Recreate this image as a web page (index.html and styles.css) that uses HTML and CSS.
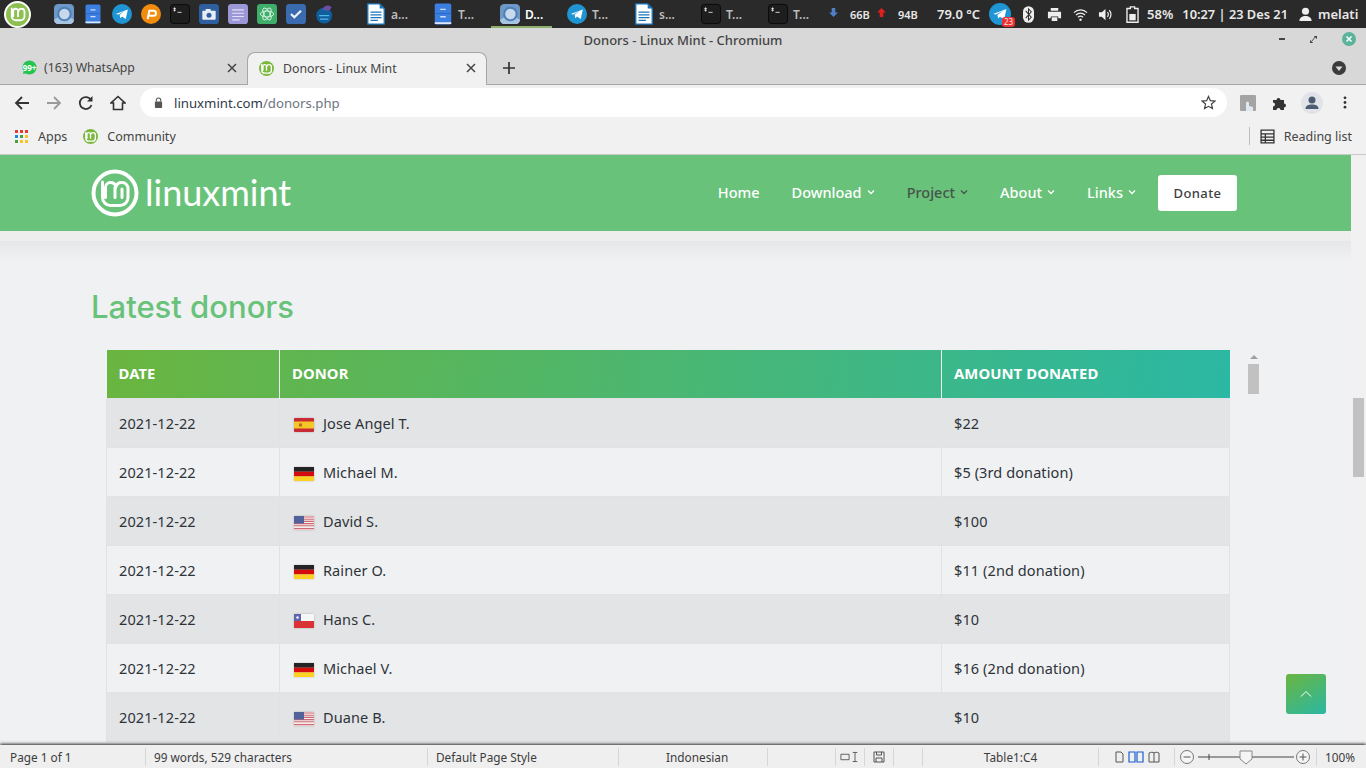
FILE: index.html
```html
<!DOCTYPE html>
<html lang="en">
<head>
    <meta charset="UTF-8">
    <meta name="viewport" content="width=device-width, initial-scale=1.0">
    <title>Donors - Linux Mint - Chromium</title>
    <link rel="stylesheet" href="styles.css">
</head>
<body>
    <!-- shared symbols -->
    <svg class="defs" aria-hidden="true">
        <defs>
            <symbol id="mint" viewBox="0 0 48 48">
                <circle cx="24" cy="24" r="21.5" fill="none" stroke="currentColor" stroke-width="4"/>
                <path d="M11.5 13v15.5a8 8 0 0 0 8 8h9.500a8 8 0 0 0 8-8v-9a6 6 0 0 0-6-6 6 6 0 0 0-6 4 6 6 0 0 0-6-4 5 5 0 0 0-4.500 5v10M24 18v10.500M31 20v8.500" fill="none" stroke="currentColor" stroke-width="3" stroke-linecap="round"/>
            </symbol>
            <symbol id="mintm" viewBox="4 4 40 40">
                <path d="M11.5 13v15.5a8 8 0 0 0 8 8h9.500a8 8 0 0 0 8-8v-9a6 6 0 0 0-6-6 6 6 0 0 0-6 4 6 6 0 0 0-6-4 5 5 0 0 0-4.500 5v10M24 18v10.500" fill="none" stroke="currentColor" stroke-width="3.600" stroke-linecap="round"/>
            </symbol>
            <symbol id="doc" viewBox="0 0 20 24">
                <path d="M1 1h13l5 5v17H1z" fill="#fff" stroke="#1b75bb" stroke-width="1.500"/>
                <path d="M14 1l5 5h-5z" fill="#1b75bb"/>
                <path d="M4 10h12M4 13h12M4 16h12M4 19h8" stroke="#1b75bb" stroke-width="1.200"/>
            </symbol>
            <symbol id="files" viewBox="0 0 20 24">
                <rect x="1" y="0.500" width="18" height="23" rx="2" fill="#3b7fe0"/>
                <path d="M1 22h18" stroke="#dfe8f5" stroke-width="2"/>
                <path d="M7 7h6M7 15h6" stroke="#cfe0f8" stroke-width="1.500"/>
                <path d="M1 11.500h18" stroke="#2b66bd"/>
            </symbol>
            <symbol id="chromium" viewBox="0 0 24 24">
                <rect width="24" height="24" rx="5" fill="#6d98c7"/>
                <path d="M0 19L12 12l12 7v0a5 5 0 0 1-5 5H5a5 5 0 0 1-5-5z" fill="#a9c4e0"/>
                <circle cx="12.500" cy="12" r="7.500" fill="#c9d9ec" stroke="#4f80b8" stroke-width="2.500"/>
            </symbol>
            <symbol id="telegram" viewBox="0 0 24 24">
                <circle cx="12" cy="12" r="12" fill="#1f96d3"/>
                <path d="M4.500 12L19 6.500 16.500 18l-4.500-3-2 2-.8-4 6-4.500-7.500 4z" fill="#fff"/>
            </symbol>
            <symbol id="terminal" viewBox="0 0 24 24">
                <rect x="0.500" y="0.500" width="23" height="23" rx="4" fill="#1e1e1e" stroke="#050505"/>
                <path d="M4 5.500h3M4 7.500h3M5.500 4v5M9 10h5" stroke="#eee" stroke-width="1"/>
            </symbol>
            <symbol id="chev" viewBox="0 0 8 6">
                <path d="M1 1.500l3 3 3-3" fill="none" stroke="currentColor" stroke-width="1.300"/>
            </symbol>
            <symbol id="close" viewBox="0 0 10 10">
                <path d="M1 1l8 8M9 1l-8 8" fill="none" stroke="#444" stroke-width="1.500"/>
            </symbol>
            <symbol id="flag-es" viewBox="0 0 20 14">
                <rect width="20" height="14" rx="1" fill="#c8222b"/>
                <rect y="3.500" width="20" height="7" fill="#f7c51e"/>
                <rect x="5" y="5.500" width="3" height="3" fill="#b5651d"/>
            </symbol>
            <symbol id="flag-de" viewBox="0 0 20 14">
                <rect width="20" height="4.700" fill="#1a1a1a"/>
                <rect y="4.700" width="20" height="4.700" fill="#d40000"/>
                <rect y="9.400" width="20" height="4.600" fill="#fcd116"/>
            </symbol>
            <symbol id="flag-us" viewBox="0 0 20 14">
                <rect width="20" height="14" fill="#f4eeee"/>
                <path d="M0 1h20M0 3.200h20M0 5.400h20M0 7.600h20M0 9.800h20M0 12.600h20" stroke="#d0656f" stroke-width="1.100"/>
                <rect width="10" height="7.500" fill="#4a5a95"/>
            </symbol>
            <symbol id="flag-cl" viewBox="0 0 20 14">
                <rect width="20" height="7" fill="#f7f7f7"/>
                <rect y="7" width="20" height="7" fill="#da2a2e"/>
                <rect width="7" height="7" fill="#5b5fa8"/>
                <circle cx="3.500" cy="3.500" r="1.200" fill="#fff"/>
            </symbol>
        </defs>
    </svg>

    <!-- desktop panel -->
    <div class="panel">
        <span class="menu-btn"><svg class="menu-logo"><use href="#mintm"/></svg></span>
        <div class="launchers">
            <svg class="lnc"><use href="#chromium"/></svg>
            <svg class="lnc"><use href="#files"/></svg>
            <svg class="lnc"><use href="#telegram"/></svg>
            <svg class="lnc" viewBox="0 0 24 24"><circle cx="12" cy="12" r="12" fill="#f28c0f"/><path d="M8 18l2-10h5a3 3 0 0 1 0 6h-5" fill="none" stroke="#fff" stroke-width="2.400"/></svg>
            <svg class="lnc"><use href="#terminal"/></svg>
            <svg class="lnc" viewBox="0 0 24 24"><rect width="24" height="24" rx="4" fill="#2f5f9e"/><rect x="4" y="8" width="16" height="11" rx="1" fill="#e8eef5"/><rect x="8" y="6" width="6" height="3" fill="#e8eef5"/><circle cx="12" cy="13.500" r="3" fill="#2f5f9e"/></svg>
            <svg class="lnc" viewBox="0 0 24 24"><rect width="24" height="24" rx="4" fill="#9c97d6"/><path d="M5 7h14M5 11h14M5 15h14M5 19h9" stroke="#e3e1f5" stroke-width="1.300"/></svg>
            <svg class="lnc" viewBox="0 0 24 24"><rect width="24" height="24" rx="4" fill="#3fae6a"/><g fill="none" stroke="#e6f7ec" stroke-width="1"><ellipse cx="12" cy="12" rx="8" ry="3.500"/><ellipse cx="12" cy="12" rx="8" ry="3.500" transform="rotate(60 12 12)"/><ellipse cx="12" cy="12" rx="8" ry="3.500" transform="rotate(120 12 12)"/></g></svg>
            <svg class="lnc" viewBox="0 0 24 24"><rect width="24" height="24" rx="4" fill="#3a6ab0"/><path d="M6 12l4 4 8-8" fill="none" stroke="#eef3fa" stroke-width="2.600"/></svg>
            <svg class="lnc" viewBox="0 0 24 24"><circle cx="11" cy="14" r="9.500" fill="#0f5f9e"/><path d="M5 14h12M6 18h10" stroke="#53b7e8" stroke-width="1.500"/><path d="M9 7c1-5 7-7 11-3l-3 4z" fill="#6a4fa3"/></svg>
        </div>
        <div class="winlist">
            <div class="win"><svg class="win-ic"><use href="#doc"/></svg><span>a...</span></div>
            <div class="win"><svg class="win-ic"><use href="#files"/></svg><span>T...</span></div>
            <div class="win on"><svg class="win-ic"><use href="#chromium"/></svg><span>D...</span></div>
            <div class="win"><svg class="win-ic"><use href="#telegram"/></svg><span>T...</span></div>
            <div class="win"><svg class="win-ic"><use href="#doc"/></svg><span>s...</span></div>
            <div class="win"><svg class="win-ic"><use href="#terminal"/></svg><span>T...</span></div>
            <div class="win"><svg class="win-ic"><use href="#terminal"/></svg><span>T...</span></div>
        </div>
        <div class="tray">
            <svg class="tray-arrow" viewBox="0 0 10 10"><path d="M3 0h4v5h3L5 10 0 5h3z" fill="#4f7fc4"/></svg>
            <span class="speed">66B</span>
            <svg class="tray-arrow up" viewBox="0 0 10 10"><path d="M3 10h4V5h3L5 0 0 5h3z" fill="#e0201c"/></svg>
            <span class="speed">94B</span>
            <span class="temp">79.0 °C</span>
            <span class="tg-tray"><svg class="tg-ic"><use href="#telegram"/></svg><b class="tg-badge">23</b></span>
            <svg class="bt" viewBox="0 0 12 18"><rect width="12" height="18" rx="6" fill="#eee"/><path d="M3 5l6 7-3 3V3l3 3-6 7" fill="none" stroke="#2b2b2b" stroke-width="1.100"/></svg>
            <svg class="ti print" viewBox="0 0 16 16"><path d="M4 1h8v3H4zM1 5h14v7h-3v-2H4v2H1zM5 11h6v4H5z" fill="#eee"/></svg>
            <svg class="ti wifi" viewBox="0 0 16 16"><path d="M1 6a10 10 0 0 1 14 0M3.200 8.500a7 7 0 0 1 9.600 0M5.300 11a4 4 0 0 1 5.400 0" fill="none" stroke="#eee" stroke-width="1.300"/><circle cx="8" cy="13.500" r="1.300" fill="#eee"/></svg>
            <svg class="ti vol" viewBox="0 0 16 16"><path d="M1 5.500h3L8 2v12l-4-3.500H1z" fill="#eee"/><path d="M10 5.500a3.500 3.500 0 0 1 0 5M12 3.500a6.500 6.500 0 0 1 0 9" fill="none" stroke="#eee" stroke-width="1.300"/></svg>
            <svg class="batt" viewBox="0 0 12 16"><path d="M4 .8h4v1.500h3.200v13H.8v-13H4z" fill="none" stroke="#eee" stroke-width="1.300"/><rect x="3" y="7.500" width="6" height="6" fill="#eee"/></svg>
            <span class="pct">58%</span>
            <span class="clock">10:27 | 23 Des 21</span>
            <svg class="ti user" viewBox="0 0 16 16"><circle cx="8" cy="4.500" r="3.800" fill="#eee"/><path d="M1.500 15c0-4 3-5.500 6.500-5.500s6.500 1.500 6.500 5.500z" fill="#eee"/></svg>
            <span class="uname">melati</span>
        </div>
    </div>

    <!-- browser window -->
    <div class="titlebar">
        <span class="wtitle">Donors - Linux Mint - Chromium</span>
        <div class="wbtns">
            <i class="w-min"></i>
            <svg class="w-max" viewBox="0 0 8 8"><path d="M5 0h3v3zM3 8H0V5zM6 1L2 6" fill="#444" stroke="#444"/></svg>
            <svg class="w-close" viewBox="0 0 14 14"><circle cx="7" cy="7" r="7" fill="#5bb39b"/><path d="M4.500 4.500l5 5M9.500 4.500l-5 5" stroke="#fff" stroke-width="1.500"/></svg>
        </div>
    </div>
    <div class="tabstrip">
        <div class="tab">
            <svg class="fav" viewBox="0 0 16 16"><circle cx="8" cy="8" r="7.500" fill="#25c351"/><path d="M1 15l1-4 3 3z" fill="#25c351"/></svg>
            <b class="wa-count">99+</b>
            <span class="tab-name">(163) WhatsApp</span>
            <svg class="tab-x"><use href="#close"/></svg>
        </div>
        <div class="tab active">
            <svg class="fav mint-fav"><use href="#mintm"/></svg>
            <span class="tab-name">Donors - Linux Mint</span>
            <svg class="tab-x"><use href="#close"/></svg>
        </div>
        <svg class="newtab" viewBox="0 0 12 12"><path d="M6 0v12M0 6h12" stroke="#333" stroke-width="1.700"/></svg>
        <svg class="tabmenu" viewBox="0 0 14 14"><circle cx="7" cy="7" r="7" fill="#3b3b3b"/><path d="M3.500 5.500h7L7 10z" fill="#ddd"/></svg>
    </div>
    <div class="toolbar">
        <svg class="tb-ic" viewBox="0 0 16 16"><path d="M15 8H2M8 2L2 8l6 6" fill="none" stroke="#333" stroke-width="1.800"/></svg>
        <svg class="tb-ic" viewBox="0 0 16 16"><path d="M1 8h13M8 2l6 6-6 6" fill="none" stroke="#9a9a9a" stroke-width="1.800"/></svg>
        <svg class="tb-ic" viewBox="0 0 16 16"><path d="M13.500 10a6 6 0 1 1-.5-5" fill="none" stroke="#333" stroke-width="1.800"/><path d="M14.500 1v5.500H9z" fill="#333"/></svg>
        <svg class="tb-ic" viewBox="0 0 16 16"><path d="M8 1.500L1 8h2.500v6.500h9V8H15zM6.500 14.500" fill="none" stroke="#333" stroke-width="1.600"/></svg>
        <div class="omnibox">
            <svg class="lock" viewBox="0 0 10 12"><path d="M2.500 5V3.500a2.500 2.500 0 0 1 5 0V5" fill="none" stroke="#555" stroke-width="1.200"/><rect x="1" y="5" width="8" height="7" rx="1" fill="#555"/></svg>
            <span class="url">linuxmint.com<em>/donors.php</em></span>
            <svg class="star" viewBox="0 0 16 16"><path d="M8 1.500l2 4.500 4.800.5-3.600 3.200 1 4.800L8 12.100l-4.200 2.400 1-4.800L1.200 6.500 6 6z" fill="none" stroke="#444" stroke-width="1.300"/></svg>
        </div>
        <svg class="ext" viewBox="0 0 16 16"><rect width="16" height="16" rx="1" fill="#a4a4a4"/><path d="M6 16V8a1.500 1.500 0 0 1 3 0v3l4 1v4z" fill="#dfe8f0"/></svg>
        <svg class="puzzle" viewBox="0 0 16 16"><path d="M1 5h3.500a2 2 0 1 1 4 0H12v3.500a2 2 0 1 1 0 4V15H8.500a2 2 0 1 0-4 0H1v-3.500a2 2 0 1 0 0-4z" fill="#333"/></svg>
        <span class="avatar"><svg viewBox="0 0 16 16"><circle cx="8" cy="5" r="3.500" fill="#4d5b73"/><path d="M1.500 14c0-3.500 3-4.500 6.500-4.500s6.500 1 6.500 4.500z" fill="#4d5b73"/></svg></span>
        <svg class="dots" viewBox="0 0 4 14"><circle cx="2" cy="2" r="1.500" fill="#333"/><circle cx="2" cy="7" r="1.500" fill="#333"/><circle cx="2" cy="12" r="1.500" fill="#333"/></svg>
    </div>
    <div class="bookmarks">
        <svg class="apps" viewBox="0 0 13 13">
            <rect width="3" height="3" fill="#e53935"/><rect x="5" width="3" height="3" fill="#e53935"/><rect x="10" width="3" height="3" fill="#e53935"/>
            <rect y="5" width="3" height="3" fill="#1e88e5"/><rect x="5" y="5" width="3" height="3" fill="#43a047"/><rect x="10" y="5" width="3" height="3" fill="#fbc02d"/>
            <rect y="10" width="3" height="3" fill="#43a047"/><rect x="5" y="10" width="3" height="3" fill="#fbc02d"/><rect x="10" y="10" width="3" height="3" fill="#fbc02d"/>
        </svg>
        <span class="bm-apps">Apps</span>
        <svg class="fav mint-fav bm-fav"><use href="#mintm"/></svg>
        <span>Community</span>
        <i class="bm-sep"></i>
        <svg class="rl" viewBox="0 0 14 14"><path d="M1 1h12v12H1zM1 4.500h12M1 7.500h12M1 10.500h12M5 4.500V13" fill="none" stroke="#333" stroke-width="1.200"/></svg>
        <span>Reading list</span>
    </div>

    <!-- page -->
    <div class="viewport">
        <div class="page">
            <header class="site-head">
                <a class="brand"><svg class="brand-logo"><use href="#mint"/></svg><span class="brand-name">linuxmint</span></a>
                <nav class="nav">
                    <a>Home</a>
                    <a>Download<svg class="caret"><use href="#chev"/></svg></a>
                    <a class="cur">Project<svg class="caret"><use href="#chev"/></svg></a>
                    <a>About<svg class="caret"><use href="#chev"/></svg></a>
                    <a>Links<svg class="caret"><use href="#chev"/></svg></a>
                    <a class="donate">Donate</a>
                </nav>
            </header>
            <div class="strip"></div>
            <main class="content">
                <h1>Latest donors</h1>
                <div class="tbl-wrap">
                    <table class="donors">
                        <thead>
                            <tr><th class="c-date">DATE</th><th class="c-donor">DONOR</th><th>AMOUNT DONATED</th></tr>
                        </thead>
                        <tbody>
                            <tr><td>2021-12-22</td><td><svg class="flag"><use href="#flag-es"/></svg>Jose Angel T.</td><td>$22</td></tr>
                            <tr><td>2021-12-22</td><td><svg class="flag"><use href="#flag-de"/></svg>Michael M.</td><td>$5 (3rd donation)</td></tr>
                            <tr><td>2021-12-22</td><td><svg class="flag"><use href="#flag-us"/></svg>David S.</td><td>$100</td></tr>
                            <tr><td>2021-12-22</td><td><svg class="flag"><use href="#flag-de"/></svg>Rainer O.</td><td>$11 (2nd donation)</td></tr>
                            <tr><td>2021-12-22</td><td><svg class="flag"><use href="#flag-cl"/></svg>Hans C.</td><td>$10</td></tr>
                            <tr><td>2021-12-22</td><td><svg class="flag"><use href="#flag-de"/></svg>Michael V.</td><td>$16 (2nd donation)</td></tr>
                            <tr><td>2021-12-22</td><td><svg class="flag"><use href="#flag-us"/></svg>Duane B.</td><td>$10</td></tr>
                        </tbody>
                    </table>
                    <div class="tbl-scroll"><i class="tbl-arrow"></i><i class="tbl-thumb"></i></div>
                </div>
            </main>
            <a class="to-top"><svg viewBox="0 0 12 8"><path d="M1 6.500l5-5 5 5" fill="none" stroke="#fff" stroke-width="1"/></svg></a>
        </div>
        <div class="scrollbar"><i class="thumb"></i></div>
    </div>

    <!-- office status bar in front -->
    <div class="statusbar">
        <span>Page 1 of 1</span>
        <span>99 words, 529 characters</span>
        <span>Default Page Style</span>
        <span class="s-lang">Indonesian</span>
        <span></span>
        <span class="s-ic"><svg viewBox="0 0 22 12" class="s-mode"><path d="M1 3h9v6H1zM14 1h5M16.500 1v10M14 11h5" fill="none" stroke="#555"/></svg></span>
        <span class="s-ic"><svg viewBox="0 0 12 12" class="s-save"><path d="M1 1h10v10H1zM3.500 1v3h5V1M3 11V7h6v4" fill="none" stroke="#555"/></svg></span>
        <span></span>
        <span class="s-cell">Table1:C4</span>
        <span class="s-ic"><svg viewBox="0 0 46 12" class="s-views"><path d="M2 1h5l2 2v8H2z" fill="none" stroke="#555"/><path d="M15 1h6v10h-6zM23 1h6v10h-6z" fill="none" stroke="#1a5fd0" stroke-width="1.200"/><path d="M35 2c2-1 4-1 5 0 1-1 3-1 5 0v9h-10zM40 2v9" fill="none" stroke="#555"/></svg></span>
        <span class="s-zoom">
            <svg viewBox="0 0 134 16" class="s-slider">
                <circle cx="8" cy="8" r="6.500" fill="#f5f5f5" stroke="#777"/><path d="M4.500 8h7" stroke="#555"/>
                <path d="M19 8h96M30 5v6" stroke="#444"/>
                <path d="M61 2h12v8l-6 5-6-5z" fill="#f5f5f5" stroke="#888"/>
                <circle cx="124" cy="8" r="6.500" fill="#f5f5f5" stroke="#777"/><path d="M120.500 8h7M124 4.500v7" stroke="#555"/>
            </svg>
        </span>
        <span class="s-pct">100%</span>
    </div>
</body>
</html>
```

FILE: styles.css
```css
html,body{
    margin: 0;
    padding: 0;
}
body{
    width: 1366px;
    height: 768px;
    overflow: hidden;
    display: flex;
    flex-direction: column;
    font-family: "Noto Sans", "Open Sans", sans-serif;
    color: #333;
    background: #d8d8d8;
}
svg{
    display: block;
    flex: none;
}
.defs{
    width: 0;
    height: 0;
    position: absolute;
}

/* desktop panel */
.panel{
    height: 28px;
    flex: none;
    display: flex;
    align-items: center;
    background: #2a2a2a;
    color: #e8e8e8;
    font-size: 12px;
}
.panel>*{
    flex: none;
}
.menu-btn{
    margin-left: 4px;
    width: 27px;
    height: 27px;
    border-radius: 50%;
    background: #8cc152;
    border: 2px solid #fff;
    box-sizing: border-box;
    display: flex;
    align-items: center;
    justify-content: center;
}
.menu-logo{
    width: 20px;
    height: 20px;
    color: #fff;
}
.launchers{
    margin-left: 23px;
    display: flex;
    gap: 9px;
    width: 303px;
}
.lnc{
    width: 20px;
    height: 20px;
}
.winlist{
    display: flex;
}
.win{
    width: 67px;
    height: 28px;
    box-sizing: border-box;
    padding-left: 9px;
    display: flex;
    align-items: center;
    gap: 5px;
    font-weight: 600;
    color: #bdbdbd;
}
.win.on{
    color: #fff;
    background: linear-gradient(#8faf6c,#8faf6c) no-repeat left bottom/61px 2px;
}
.win-ic{
    width: 20px;
    height: 22px;
}
.tray{
    display: flex;
    align-items: center;
    margin-left: 3px;
    font-weight: 600;
    font-size: 11px;
    white-space: nowrap;
}
.tray-arrow{
    width: 9px;
    height: 9px;
    margin-top: -3px;
}
.tray-arrow.up{
    margin-left: 4px;
}
.speed{
    margin-left: 12px;
    width: 23px;
}
.temp{
    margin-left: 16px;
    font-size: 13px;
}
.tg-tray{
    position: relative;
    margin-left: 9px;
}
.tg-ic{
    width: 22px;
    height: 22px;
}
.tg-badge{
    position: absolute;
    right: -4px;
    bottom: -2px;
    padding: 0 2px;
    border-radius: 3px;
    background: #ee2f2f;
    font-size: 8px;
    font-weight: 400;
    line-height: 10px;
}
.bt{
    width: 11px;
    height: 17px;
    margin-left: 12px;
}
.ti{
    width: 15px;
    height: 15px;
}
.print{
    margin-left: 13px;
}
.wifi{
    margin-left: 11px;
}
.vol{
    margin-left: 10px;
}
.batt{
    width: 13px;
    height: 17px;
    margin-left: 13px;
}
.pct{
    margin-left: 8px;
    font-size: 13px;
}
.clock{
    margin-left: 9px;
    font-size: 12.800px;
}
.user{
    margin-left: 10px;
}
.uname{
    margin-left: 5px;
    font-size: 13px;
}

/* chromium window */
.titlebar{
    height: 24px;
    flex: none;
    display: flex;
    align-items: center;
    justify-content: center;
    position: relative;
    font-size: 13px;
    font-weight: 500;
    color: #444;
}
.wbtns{
    position: absolute;
    right: 10px;
    top: 4px;
    display: flex;
    align-items: center;
    gap: 25px;
    height: 14px;
}
.w-min{
    width: 6px;
    height: 2px;
    background: #444;
}
.w-max{
    width: 7px;
    height: 7px;
}
.w-close{
    width: 14px;
    height: 14px;
}
.tabstrip{
    height: 33px;
    flex: none;
    display: flex;
    align-items: stretch;
    position: relative;
    box-sizing: border-box;
    box-shadow: inset 0 -1px 0 #a6a6a6;
    font-size: 12.300px;
}
.tab{
    width: 247px;
    box-sizing: border-box;
    padding: 0 10px 2px 22px;
    display: flex;
    align-items: center;
    position: relative;
    color: #444;
}
.tab.active{
    width: 240px;
    margin-left: 0;
    padding: 0 10px 2px 11px;
    background: #f1f1f1;
    border: 1px solid #a6a6a6;
    border-bottom: 0;
    border-radius: 8px 8px 0 0;
}
.fav{
    width: 15px;
    height: 15px;
}
.mint-fav{
    color: #fff;
    border-radius: 50%;
    background: #7ab93e;
}
.wa-count{
    position: absolute;
    left: 21px;
    width: 17px;
    text-align: center;
    color: #fff;
    font-size: 8px;
    font-weight: 700;
}
.tab-name{
    margin-left: 7px;
    flex: 1;
    white-space: nowrap;
}
.tab.active .tab-name{
    margin-left: 9px;
}
.tab-x{
    width: 10px;
    height: 10px;
}
.newtab{
    width: 12px;
    height: 12px;
    align-self: center;
    margin: 0 0 2px 16px;
}
.tabmenu{
    width: 14px;
    height: 14px;
    align-self: center;
    margin: 0 20px 2px auto;
}
.toolbar{
    height: 37px;
    flex: none;
    display: flex;
    align-items: center;
    box-sizing: border-box;
    background: #f1f1f1;
    padding: 0 0 2px 14px;
}
.tb-ic{
    width: 16px;
    height: 16px;
    margin-right: 16px;
}
.omnibox{
    margin-left: -2px;
    width: 1087px;
    height: 29px;
    box-sizing: border-box;
    padding: 0 11px 0 14px;
    display: flex;
    align-items: center;
    background: #fff;
    border-radius: 15px;
}
.lock{
    width: 9px;
    height: 11px;
}
.url{
    margin-left: 11px;
    flex: 1;
    font-size: 13.200px;
    color: #2f3a4c;
}
.url em{
    font-style: normal;
    color: #6d7480;
}
.star{
    width: 15px;
    height: 15px;
}
.ext{
    width: 16px;
    height: 16px;
    margin-left: 13px;
}
.puzzle{
    width: 16px;
    height: 16px;
    margin-left: 16px;
}
.avatar{
    width: 22px;
    height: 22px;
    margin-left: 13px;
    border-radius: 50%;
    background: #e0e3e8;
    display: flex;
    align-items: center;
    justify-content: center;
}
.avatar svg{
    width: 16px;
    height: 16px;
}
.dots{
    width: 4px;
    height: 13px;
    margin-left: 20px;
}
.bookmarks{
    height: 33px;
    flex: none;
    display: flex;
    align-items: center;
    box-sizing: border-box;
    padding: 0 14px 4px 15px;
    background: #f1f1f1;
    border-bottom: 1px solid #c9c9c9;
    font-size: 12.500px;
    color: #444;
}
.apps{
    width: 13px;
    height: 13px;
}
.bm-apps{
    margin-left: 10px;
}
.bm-fav{
    margin: 0 9px 0 16px;
}
.bm-sep{
    margin-left: auto;
    width: 1px;
    height: 18px;
    background: #bdbdbd;
}
.rl{
    width: 15px;
    height: 15px;
    margin: 0 9px 0 10px;
}

/* page */
.viewport{
    flex: 1;
    min-height: 0;
    display: flex;
    overflow: hidden;
    background: #f0f1f3;
}
.page{
    flex: 1;
    position: relative;
    overflow: hidden;
}
.scrollbar{
    width: 15px;
    flex: none;
    background: #f1f1f1;
    padding-top: 243px;
    box-sizing: border-box;
}
.thumb{
    display: block;
    width: 11px;
    height: 79px;
    margin-left: 2px;
    background: #c1c1c1;
}
.site-head{
    height: 76px;
    box-sizing: border-box;
    padding: 0 114px 0 91px;
    display: flex;
    align-items: center;
    justify-content: space-between;
    background: #69c27a;
}
.brand{
    display: flex;
    align-items: center;
    color: #fff;
}
.brand-logo{
    width: 48px;
    height: 48px;
}
.brand-name{
    margin-left: 6px;
    padding-bottom: 2px;
    font-family: "Lato", sans-serif;
    font-weight: 400;
    font-size: 36px;
    line-height: 44px;
}
.nav{
    display: flex;
    align-items: center;
    gap: 32px;
    font-size: 14.500px;
    font-weight: 500;
    color: #fff;
}
.nav a{
    display: flex;
    align-items: center;
    padding-bottom: 2px;
}
.nav a.cur{
    color: #47544a;
}
.caret{
    width: 8px;
    height: 6px;
    margin-left: 5px;
}
.nav a.donate{
    margin-left: -10px;
    width: 79px;
    height: 36px;
    box-sizing: border-box;
    padding: 0;
    justify-content: center;
    background: #fff;
    border-radius: 3px;
    color: #3c4043;
    font-size: 13px;
    letter-spacing: .4px;
}
.strip{
    height: 10px;
    background: #eeeeee;
}
.content{
    padding: 0 121px 0 91px;
    background: linear-gradient(to bottom,#e6e7e9,#f0f1f3 20px);
}
h1{
    margin: 0;
    padding-top: 45px;
    height: 64px;
    font-family: "Inter", sans-serif;
    font-size: 31px;
    line-height: 42px;
    font-weight: 500;
    color: #69c27a;
}
.tbl-wrap{
    margin-left: 15px;
    display: flex;
    gap: 18px;
    height: 500px;
}
.donors{
    width: 1124px;
    flex: none;
    table-layout: fixed;
    border-collapse: collapse;
    align-self: flex-start;
    font-size: 14.500px;
    letter-spacing: .1px;
    color: #2d3338;
}
.c-date{
    width: 173px;
}
.c-donor{
    width: 662px;
}
.donors th{
    box-sizing: border-box;
    height: 48px;
    padding: 0 12px 2px;
    text-align: left;
    font-size: 14.800px;
    font-weight: 700;
    color: #fff;
    border-left: 1px solid #f0f1f3;
}
.donors th:first-child{
    border-left: 0;
}
.donors thead tr{
    background: linear-gradient(100deg,#6ab53f,#2bb8a4);
}
.donors td{
    height: 48px;
    padding: 0 12px;
    border: 1px solid #e0e2e6;
    background: #f0f1f3;
    white-space: nowrap;
}
.donors tbody tr:nth-child(odd) td{
    background: #e3e4e6;
}
.flag{
    display: inline-block;
    width: 20px;
    height: 14px;
    margin: 0 9px 0 2px;
    vertical-align: -3px;
    opacity: .95;
    filter: drop-shadow(0 0 1px rgba(0,0,0,.2));
}
.tbl-scroll{
    width: 11px;
    padding-top: 5px;
}
.tbl-arrow{
    display: block;
    width: 0;
    height: 0;
    margin: 0 0 5px 2px;
    border: 4px solid transparent;
    border-top: 0;
    border-bottom-color: #a0a0a0;
}
.tbl-thumb{
    display: block;
    width: 11px;
    height: 30px;
    background: #c1c1c1;
}
.to-top{
    position: absolute;
    left: 1286px;
    top: 519px;
    width: 40px;
    height: 40px;
    border-radius: 3px;
    display: flex;
    align-items: center;
    justify-content: center;
    background: linear-gradient(150deg,#6ab53f,#2bb8a4);
}
.to-top svg{
    width: 12px;
    height: 8px;
}

/* office status bar */
.statusbar{
    height: 23px;
    flex: none;
    display: grid;
    grid-template-columns: 146px 282px 191px 149px 68px 29px 29px 29px 176px 76px 142px 49px;
    align-items: center;
    position: relative;
    background: #efefef;
    box-shadow: 0 -1px 3px rgba(0,0,0,.85);
    font-size: 11.800px;
    color: #3c3c3c;
}
.statusbar>span{
    height: 18px;
    line-height: 19px;
    box-sizing: border-box;
    padding-left: 8px;
    border-right: 1px solid #d6d6d6;
    white-space: nowrap;
    display: block;
}
.statusbar>span:first-child{
    padding-left: 10px;
}
.statusbar>.s-lang{
    padding-left: 47px;
}
.statusbar>.s-cell{
    padding: 0;
    text-align: center;
}
.statusbar>.s-ic{
    padding: 3px 0 0;
    display: flex;
    justify-content: center;
}
.s-mode{
    width: 20px;
    height: 12px;
}
.s-save{
    width: 12px;
    height: 12px;
}
.s-views{
    width: 46px;
    height: 12px;
}
.statusbar>.s-zoom{
    padding: 1px 0 0 4px;
}
.s-slider{
    width: 134px;
    height: 16px;
}
.statusbar>.s-pct{
    border: 0;
    padding-left: 8px;
}
```
